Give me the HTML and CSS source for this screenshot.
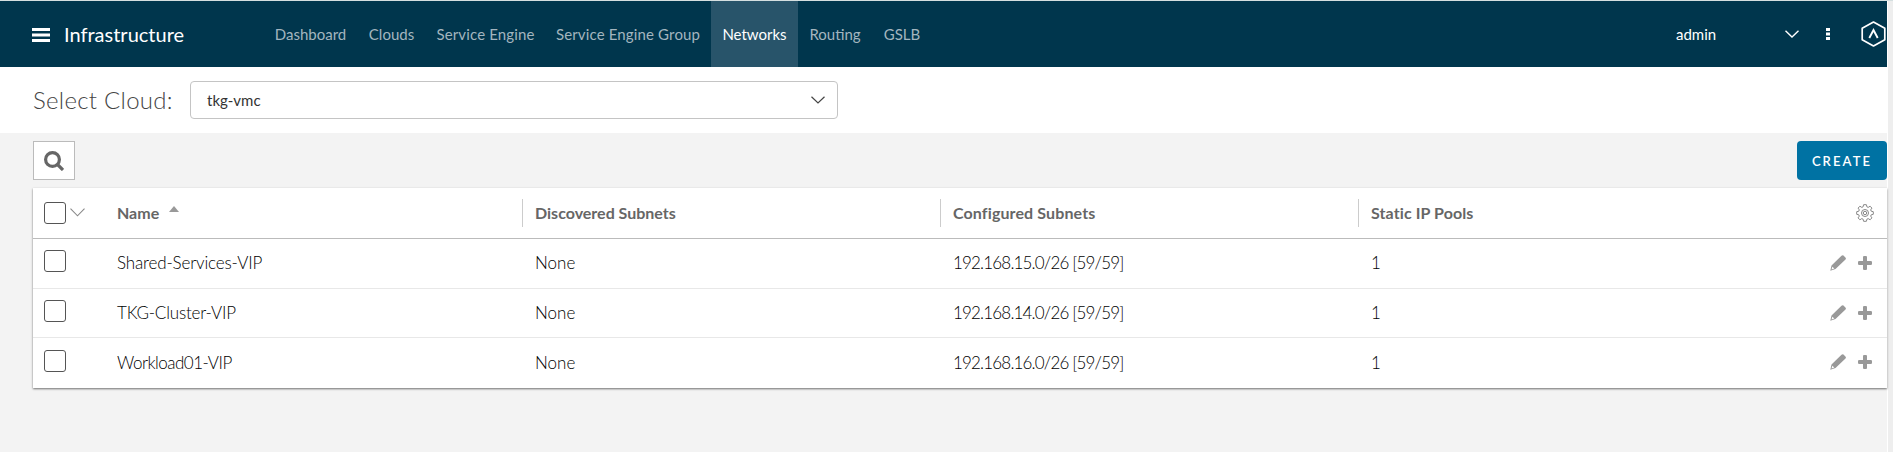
FILE: index.html
```html
<!DOCTYPE html>
<html lang="en">
<head>
<meta charset="utf-8">
<title>Infrastructure - Networks</title>
<link rel="stylesheet" href="styles.css">
</head>
<body>
<svg class="sprite" width="0" height="0">
  <symbol id="pencil" viewBox="0 0 16 16"><path d="M11.500.800Q12.500-.3 13.500.600L15.400 2.500Q16.400 3.500 15.500 4.500L5.500 14 .3 15.800 1.500 10.500ZM2.400 11.800 1.500 14.500 4.300 13.400Z" fill="#999" fill-rule="evenodd"/></symbol>
  <symbol id="plus" viewBox="0 0 14 14"><path d="M5 1.200Q5 0 6 0H8Q9 0 9 1.200V5H12.800Q14 5 14 6V8Q14 9 12.800 9H9V12.800Q9 14 8 14H6Q5 14 5 12.800V9H1.200Q0 9 0 8V6Q0 5 1.200 5H5Z" fill="#999"/></symbol>
</svg>
<div class="page">
  <header class="topbar">
    <svg class="menu" viewBox="0 0 18 14" width="18" height="14"><path d="M0 1.500H18M0 7H18M0 12.500H18" stroke="#fff" stroke-width="3"/></svg>
    <div class="title">Infrastructure</div>
    <nav class="tabs">
      <a class="tab dashboard">Dashboard</a>
      <a class="tab clouds">Clouds</a>
      <a class="tab engine">Service Engine</a>
      <a class="tab group">Service Engine Group</a>
      <a class="tab networks active">Networks</a>
      <a class="tab routing">Routing</a>
      <a class="tab gslb">GSLB</a>
    </nav>
    <div class="user">
      <span class="username">admin</span>
      <svg class="user-arrow" viewBox="0 0 14 8" width="14" height="8"><path d="M.5.7 7 7 13.500.7" fill="none" stroke="#fff" stroke-width="1.400"/></svg>
      <svg class="dots" viewBox="0 0 4 12" width="4" height="12"><path d="M0 0H4V3H0ZM0 4.500H4V7.500H0ZM0 9H4V12H0Z" fill="#fff"/></svg>
      <svg class="logo" viewBox="0 0 25 26" width="25" height="26"><path d="M12.500 1 23.800 7.200V18.800L12.500 25 1.200 18.800V7.200Z" fill="none" stroke="#fff" stroke-width="1.700" stroke-linejoin="round"/><path d="M8.300 17 12.500 9 16.700 17" fill="none" stroke="#fff" stroke-width="1.900"/></svg>
    </div>
  </header>
  <section class="cloud">
    <label class="cloud-label">Select Cloud:</label>
    <div class="select"><span class="select-value">tkg-vmc</span>
      <svg viewBox="0 0 14 8" width="14" height="8"><path d="M.5.700 7 7 13.500.700" fill="none" stroke="#444" stroke-width="1.200"/></svg>
    </div>
  </section>
  <main class="content">
    <div class="toolbar">
      <button class="search"><svg viewBox="0 0 20 20" width="20" height="20"><circle cx="8.500" cy="8.500" r="6.900" fill="none" stroke="#666" stroke-width="3.200"/><path d="M13.500 13.500 19 19" stroke="#666" stroke-width="3.200"/></svg></button>
      <button class="create">CREATE</button>
    </div>
    <div class="grid">
      <div class="row head">
        <div class="pick"><span class="box"></span><svg viewBox="0 0 15 9" width="15" height="9"><path d="M.5.600 7.500 7.800 14.500.600" fill="none" stroke="#888" stroke-width="1.100"/></svg></div>
        <div class="cell name"><span>Name</span><svg class="sort" viewBox="0 0 10 6" width="10" height="6"><path d="M0 6 5 0 10 6Z" fill="#999"/></svg></div>
        <div class="cell sep"><span>Discovered Subnets</span></div>
        <div class="cell sep"><span class="h-conf">Configured Subnets</span></div>
        <div class="cell sep last"><span class="h-pool">Static IP Pools</span></div>
        <div class="actions"><svg viewBox="0 0 18 18" width="18" height="18" fill="none" stroke="#888"><path d="M7.600.700H10.400L10.900 2.800 12.200 3.400 14.100 2.200 15.900 4.100 14.700 5.900 15.200 7.200 17.300 7.700V10.300L15.200 10.800 14.700 12.100 15.900 13.900 14.100 15.800 12.200 14.600 10.900 15.200 10.400 17.300H7.600L7.100 15.200 5.800 14.600 3.900 15.800 2.100 13.900 3.300 12.100 2.800 10.800.700 10.300V7.700L2.800 7.200 3.300 5.900 2.100 4.100 3.900 2.200 5.800 3.400 7.100 2.800Z" stroke-linejoin="round"/><circle cx="9" cy="9" r="3.500"/><circle cx="9" cy="9" r="1.700"/></svg></div>
      </div>
      <div class="row first">
        <div class="pick"><span class="box"></span></div>
        <div class="cell name"><span class="v-shared">Shared-Services-VIP</span></div>
        <div class="cell"><span>None</span></div>
        <div class="cell"><span class="v-ip">192.168.15.0/26 [59/59]</span></div>
        <div class="cell last">1</div>
        <div class="actions"><svg width="16" height="16"><use href="#pencil"/></svg><svg width="14" height="14"><use href="#plus"/></svg></div>
      </div>
      <div class="row">
        <div class="pick"><span class="box"></span></div>
        <div class="cell name"><span class="v-tkg">TKG-Cluster-VIP</span></div>
        <div class="cell"><span>None</span></div>
        <div class="cell"><span class="v-ip">192.168.14.0/26 [59/59]</span></div>
        <div class="cell last">1</div>
        <div class="actions"><svg width="16" height="16"><use href="#pencil"/></svg><svg width="14" height="14"><use href="#plus"/></svg></div>
      </div>
      <div class="row">
        <div class="pick"><span class="box"></span></div>
        <div class="cell name"><span class="v-work">Workload01-VIP</span></div>
        <div class="cell"><span>None</span></div>
        <div class="cell"><span class="v-ip">192.168.16.0/26 [59/59]</span></div>
        <div class="cell last">1</div>
        <div class="actions"><svg width="16" height="16"><use href="#pencil"/></svg><svg width="14" height="14"><use href="#plus"/></svg></div>
      </div>
    </div>
  </main>
</div>
</body>
</html>
```
FILE: styles.css
```css
* { box-sizing: border-box; }
body { margin: 0; height: 452px; background: #eee; font-family: Lato, sans-serif; overflow: hidden; border-top: 1px solid #d5dfe0; }
svg { display: block; flex: none; }
.sprite { position: absolute; }
.page { width: 1888px; height: 451px; border-right: 1px solid #fff; background: #f3f3f3; display: flex; flex-direction: column; }
.topbar { height: 66px; flex: none; background: #00364d; display: flex; align-items: center; padding-left: 32px; color: #fff; }
.menu { margin-top: 1px; }
.title { width: 214px; padding: 0 0 1px 14px; font-size: 20px; white-space: nowrap; }
.tabs { display: flex; height: 66px; }
.tab { display: flex; align-items: center; justify-content: center; padding-bottom: 1px; color: #a3b5bf; font-size: 15px; white-space: nowrap; }
.dashboard { width: 93px; }
.clouds { width: 69px; }
.engine { width: 119px; letter-spacing: .15px; }
.group { width: 166px; letter-spacing: .15px; }
.networks { width: 87px; }
.routing { width: 74px; }
.gslb { width: 60px; }
.active { background: #28546a; color: #fff; }
.user { margin-left: auto; display: flex; align-items: center; padding-right: 1px; }
.username { width: 109px; padding-bottom: 1px; font-size: 15px; }
.user-arrow { margin-right: 27px; }
.dots { margin-right: 31px; }
.cloud { height: 66px; flex: none; background: #fff; display: flex; align-items: center; padding-left: 33px; }
.cloud-label { width: 157px; padding-bottom: 1px; font-size: 24px; font-weight: 300; letter-spacing: .28px; color: #444; white-space: nowrap; }
.select { width: 648px; height: 38px; border: 1px solid #c4c4c4; border-radius: 4px; display: flex; align-items: center; justify-content: space-between; padding: 0 12px 0 16px; font-size: 15px; color: #333; }
.content { padding: 8px 0 0 33px; }
.toolbar { display: flex; justify-content: space-between; height: 47px; }
.search { width: 42px; height: 39px; padding: 0; background: #fff; border: 1px solid #bbb; display: flex; align-items: center; justify-content: center; }
.create { width: 90px; height: 39px; padding: 1px 0 0; border: 0; border-radius: 4px; background: #0072a3; color: #fff; font: 600 13px Lato, sans-serif; letter-spacing: 2.1px; }
.grid { background: #fff; box-shadow: 0 1px 2px rgba(0,0,0,.55); }
.row { height: 49px; display: flex; align-items: center; border-bottom: 1px solid #e8e8e8; font-size: 17px; font-weight: 300; color: #000; white-space: nowrap; padding-bottom: 1px; }
.row:last-child { border-bottom: 0; height: 50px; padding-bottom: 2px; }
.row.first { height: 50px; padding-bottom: 2px; }
.row.head { height: 51px; border-bottom-color: #bbb; padding-bottom: 1px; font-weight: 700; font-size: 16px; color: #666; }
.head .cell span { padding-bottom: 1px; }
.pick { width: 84px; padding-left: 11px; display: flex; align-items: center; gap: 4px; }
.row:not(.head) .pick { padding-bottom: 3px; }
.box { width: 22px; height: 22px; border: 1px solid #555; border-radius: 3px; }
.cell { width: 418px; height: 28px; display: flex; align-items: center; }
.name { width: 405px; }
.cell:not(.name) { padding-left: 13px; }
.sep { border-left: 1px solid #ccc; }
.cell.sep { padding-left: 12px; }
.cell.last { flex: 1; }
.h-conf { letter-spacing: .12px; }
.h-pool { letter-spacing: .1px; }
.v-shared { letter-spacing: -.14px; }
.v-tkg { letter-spacing: -.18px; }
.v-work { letter-spacing: -.5px; }
.v-ip { letter-spacing: -.82px; }
.sort { margin: 0 0 7px 10px; }
.actions { display: flex; align-items: center; gap: 12px; padding-right: 15px; }
.head .actions { padding-right: 13px; }
```
